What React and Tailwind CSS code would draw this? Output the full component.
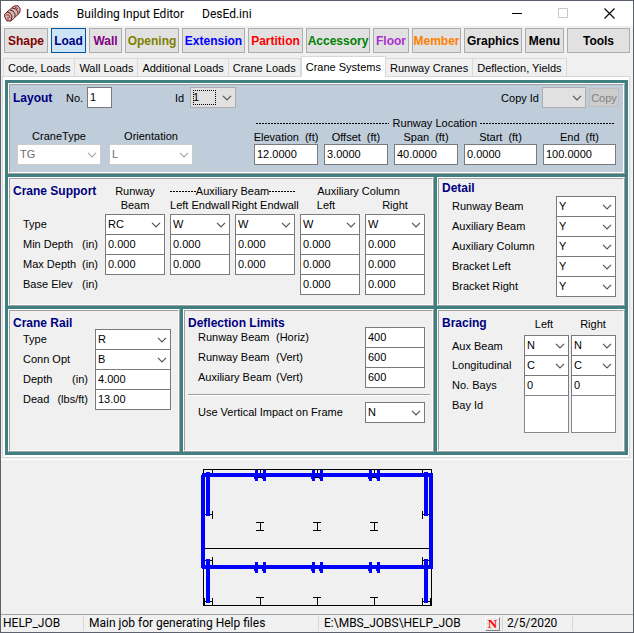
import React from "react";

function cx(...parts) {
  return parts.filter(Boolean).join(" ");
}

function Chevron({ className }) {
  return (
    <svg
      viewBox="0 0 10 6"
      className={cx("pointer-events-none absolute right-1 top-1/2 h-[6px] w-[10px] -translate-y-1/2", className)}
      fill="none"
      stroke="currentColor"
      strokeWidth="1.2"
      aria-hidden="true"
    >
      <path d="M1 0.8 L5 4.8 L9 0.8" />
    </svg>
  );
}

const tones = {
  normal: "border-[#7a7a7a] bg-white text-black",
  disabled: "border-[#cccccc] bg-white text-[#6d6d6d]",
  button: "border-[#adadad] bg-[#e1e1e1] text-black",
};

function Pick({ id, label, value, tone = "normal", disabled, focused, className }) {
  return (
    <div className={cx("relative h-[21px]", className)}>
      <select
        id={id}
        aria-label={label}
        defaultValue={value}
        disabled={disabled}
        className={cx(
          "block h-full w-full appearance-none rounded-none border pb-[2px] pl-[2px] pr-4 opacity-100 outline-none",
          tones[tone]
        )}
      >
        <option value={value}>{value}</option>
      </select>
      {focused && (
        <span className="pointer-events-none absolute inset-y-[3px] left-[3px] right-5 border border-dotted border-black" />
      )}
      <Chevron className={tone === "disabled" ? "text-[#a8a8a8]" : "text-[#555555]"} />
    </div>
  );
}

function Field({ id, label, value, className }) {
  return (
    <input
      id={id}
      aria-label={label}
      defaultValue={value}
      className={cx(
        "block h-[21px] w-full min-w-0 rounded-none border border-[#7a7a7a] bg-white pb-[2px] pl-[2px] text-black outline-none",
        className
      )}
    />
  );
}

function Panel({ className, children }) {
  return (
    <section className="min-w-0 border border-t-white border-l-white border-r-[#a0a0a0] border-b-[#a0a0a0]">
      <div
        className={cx(
          "h-full border border-t-[#a0a0a0] border-l-[#a0a0a0] border-r-white border-b-white",
          className
        )}
      >
        {children}
      </div>
    </section>
  );
}

function Heading({ className, children }) {
  return (
    <h2 className={cx("whitespace-nowrap text-[12px] font-bold leading-[14px] text-[#000080]", className)}>
      {children}
    </h2>
  );
}

function Dashes() {
  return (
    <span className="h-px flex-1 bg-[repeating-linear-gradient(90deg,#000_0_2px,transparent_2px_3px)]" />
  );
}

function RowLabel({ htmlFor, text, unit, className }) {
  return (
    <label htmlFor={htmlFor} className={cx("flex h-5 items-center justify-between whitespace-nowrap", className)}>
      <span>{text}</span>
      {unit && <span>{unit}</span>}
    </label>
  );
}

const modules = [
  ["Shape", "text-[#800000]"],
  ["Load", "text-[#000080]"],
  ["Wall", "text-[#800080]"],
  ["Opening", "text-[#808000]"],
  ["Extension", "text-[#0000ff]"],
  ["Partition", "text-[#ff0000]"],
  ["Accessory", "text-[#008000]"],
  ["Floor", "text-[#a830d0]"],
  ["Member", "text-[#ff8000]"],
  ["Graphics", "text-black"],
  ["Menu", "text-black"],
  ["Tools", "text-black"],
];

const tabs = [
  "Code, Loads",
  "Wall Loads",
  "Additional Loads",
  "Crane Loads",
  "Crane Systems",
  "Runway Cranes",
  "Deflection, Yields",
];

function TitleBar() {
  return (
    <header className="flex h-[25px] items-center bg-white pl-[3px] font-['Roboto','Noto_Sans',sans-serif] text-[12px]">
      <svg viewBox="0 0 17 17" className="h-[17px] w-[17px]" aria-hidden="true">
        <path d="M.7 9 L10 1 L14 .7 L16.3 4 L15.5 8 L7 16 L3 16 L.7 12 Z" fill="#cdbcbc" stroke="#701818" />
        <path d="M3 7 L6 8 L8 11 L7 16 M6 5 L9 6 L11 9 V12 M8 3 L12 4 L14 7 V9" fill="none" stroke="#701818" />
        <path d="M2 10 L5 10 L6 13 M4 12 V15 M11 2 L14 4" fill="none" stroke="#a03030" />
      </svg>
      <h1 className="ml-[5px]">Loads</h1>
      <span className="ml-[18px]">Building Input Editor</span>
      <span className="ml-[18px]">DesEd.ini</span>
      <div className="ml-auto flex pr-[18px]">
        <button aria-label="Minimize" className="mr-[35px]">
          <svg viewBox="0 0 11 11" className="h-[11px] w-[11px]" stroke="#000"><path d="M0 5.5H10" /></svg>
        </button>
        <button aria-label="Maximize" disabled className="mr-[35px]">
          <svg viewBox="0 0 11 11" className="h-[11px] w-[11px]" fill="none" stroke="#c8c8c8"><path d="M.5 .5H9.5V9.5H.5Z" /></svg>
        </button>
        <button aria-label="Close">
          <svg viewBox="0 0 11 11" className="h-[11px] w-[11px]" stroke="#000" strokeWidth="1.1"><path d="M.5 .5L10.5 10.5M10.5 .5L.5 10.5" /></svg>
        </button>
      </div>
    </header>
  );
}

function Toolbar() {
  return (
    <nav className="grid grid-cols-[44fr_35fr_33fr_54fr_63fr_55fr_64fr_36fr_49fr_58fr_39fr_63fr] gap-[3px] pl-[3px] pr-[3px] pt-[2px]">
      {modules.map(([name, color]) => (
        <button
          key={name}
          className={cx(
            "flex h-[25px] min-w-0 items-center justify-center border text-[12px] font-bold",
            color,
            name === "Load" ? "border-[#005499] bg-[#cce4f7]" : "border-[#adadad] bg-[#e1e1e1]"
          )}
        >
          {name}
        </button>
      ))}
    </nav>
  );
}

function Tabs() {
  return (
    <div role="tablist" className="flex items-end pl-[2px] pt-[3px]">
      {tabs.map((name) =>
        name === "Crane Systems" ? (
          <button
            key={name}
            role="tab"
            aria-selected="true"
            className="relative -mb-px h-[21px] whitespace-nowrap border border-b-0 border-[#d9d9d9] bg-white px-1"
          >
            {name}
          </button>
        ) : (
          <button
            key={name}
            role="tab"
            aria-selected="false"
            className="h-[18px] whitespace-nowrap border border-b-0 border-l-0 border-[#d9d9d9] px-1 first:border-l"
          >
            {name}
          </button>
        )
      )}
    </div>
  );
}

const locations = [
  ["Elevation", "12.0000"],
  ["Offset", "3.0000"],
  ["Span", "40.0000"],
  ["Start", "0.0000"],
  ["End", "100.0000"],
];

function LayoutPanel() {
  return (
    <Panel className="bg-[#bfccda] px-[3px] pb-[7px] pr-[7px] pt-[2px]">
      <div className="flex h-[21px] items-center">
        <Heading className="w-[53px]">Layout</Heading>
        <label htmlFor="layout-no" className="w-[21px]">No.</label>
        <div className="w-[25px]"><Field id="layout-no" value="1" /></div>
        <label htmlFor="layout-id" className="ml-[63px] w-[15px]">Id</label>
        <Pick id="layout-id" value="1" tone="button" focused className="w-[46px]" />
        <label htmlFor="copy-id" className="ml-auto mr-[3px]">Copy Id</label>
        <Pick id="copy-id" value="" tone="button" className="w-[44px]" />
        <button disabled className="-mr-[3px] ml-[3px] h-[19px] w-[30px] border border-[#bfbfbf] bg-[#cccccc] text-[#838383]">
          Copy
        </button>
      </div>
      <div className="mt-[8px] flex items-end justify-between">
        <div className="flex gap-2 pl-1">
          {[["CraneType", "TG"], ["Orientation", "L"]].map(([name, value]) => (
            <div key={name} className="w-[84px]">
              <label htmlFor={name} className="block h-[15px] text-center leading-[14px]">{name}</label>
              <Pick id={name} value={value} tone="disabled" disabled />
            </div>
          ))}
        </div>
        <div role="group" aria-labelledby="runway-location" className="w-[362px]">
          <div className="flex h-[14px] items-center gap-[3px] pl-[2px] pr-[2px]">
            <Dashes />
            <span id="runway-location" className="pl-[1px]">Runway Location</span>
            <span className="flex w-[134px]"><Dashes /></span>
          </div>
          <div className="grid grid-cols-[64fr_64fr_64fr_73fr_73fr] gap-x-[6px]">
            {locations.map(([name, value]) => (
              <div key={name} className="min-w-0">
                <label htmlFor={name} className="flex h-[14px] items-center justify-center gap-[6px]">
                  <span>{name}</span>
                  <span>(ft)</span>
                </label>
                <Field id={name} value={value} />
              </div>
            ))}
          </div>
        </div>
      </div>
    </Panel>
  );
}

const supportColumns = [
  ["Runway Beam", "RC", ["0.000", "0.000"]],
  ["Aux Beam Left Endwall", "W", ["0.000", "0.000"]],
  ["Aux Beam Right Endwall", "W", ["0.000", "0.000"]],
  ["Aux Column Left", "W", ["0.000", "0.000", "0.000"]],
  ["Aux Column Right", "W", ["0.000", "0.000", "0.000"]],
];
const supportRows = ["Min Depth", "Max Depth", "Base Elev"];

function CraneSupport() {
  return (
    <Panel className="pr-[7px] pt-[5px]">
      <div className="grid grid-cols-[90px_repeat(5,minmax(0,1fr))] gap-x-[5px] whitespace-nowrap text-center leading-[14px]">
        <Heading className="pl-[3px] text-left">Crane Support</Heading>
        <span>Runway</span>
        <div className="col-span-2 flex items-center">
          <Dashes />
          <span>Auxiliary Beam</span>
          <Dashes />
        </div>
        <span className="col-span-2 pr-2">Auxiliary Column</span>
        <span />
        <span>Beam</span>
        <span className="flex justify-center">Left Endwall</span>
        <span className="flex justify-center">Right Endwall</span>
        <span className="pr-2">Left</span>
        <span>Right</span>
      </div>
      <div className="mt-[2px] grid grid-cols-[90px_repeat(5,minmax(0,1fr))] gap-x-[5px] pb-[9px]">
        <div className="pl-[13px] pr-[2px]">
          <RowLabel text="Type" />
          <RowLabel text="Min Depth" unit="(in)" />
          <RowLabel text="Max Depth" unit="(in)" />
          <RowLabel text="Base Elev" unit="(in)" />
        </div>
        {supportColumns.map(([name, type, values]) => (
          <div key={name}>
            <Pick label={name + " Type"} value={type} />
            {values.map((value, i) => (
              <Field key={supportRows[i]} label={name + " " + supportRows[i]} value={value} className="-mt-px" />
            ))}
          </div>
        ))}
      </div>
    </Panel>
  );
}

const details = ["Runway Beam", "Auxiliary Beam", "Auxiliary Column", "Bracket Left", "Bracket Right"];

function Detail() {
  return (
    <Panel className="pl-[3px] pr-[7px] pt-[2px]">
      <Heading className="h-[15px]">Detail</Heading>
      {details.map((name) => (
        <div key={name} className="flex h-5 justify-between pl-[10px]">
          <RowLabel htmlFor={"detail-" + name} text={name} />
          <Pick id={"detail-" + name} value="Y" className="w-[60px]" />
        </div>
      ))}
    </Panel>
  );
}

function CraneRail() {
  const rows = [
    ["Type", "", "R", true],
    ["Conn Opt", "", "B", true],
    ["Depth", "(in)", "4.000", false],
    ["Dead", "(lbs/ft)", "13.00", false],
  ];
  return (
    <Panel className="pl-[3px] pr-[7px] pt-[5px]">
      <Heading className="h-[13px]">Crane Rail</Heading>
      {rows.map(([name, unit, value, list]) => (
        <div key={name} className="flex h-5 pl-[10px]">
          <RowLabel htmlFor={"rail-" + name} text={name} unit={unit} className="mr-[7px] w-[65px]" />
          {list ? (
            <Pick id={"rail-" + name} value={value} className="flex-1" />
          ) : (
            <div className="min-w-0 flex-1"><Field id={"rail-" + name} value={value} /></div>
          )}
        </div>
      ))}
    </Panel>
  );
}

function DeflectionLimits() {
  const rows = [
    ["Runway Beam", "(Horiz)", "400"],
    ["Runway Beam", "(Vert)", "600"],
    ["Auxiliary Beam", "(Vert)", "600"],
  ];
  return (
    <Panel className="pl-[3px] pt-[5px]">
      <Heading className="h-[11px]">Deflection Limits</Heading>
      {rows.map(([name, unit, value], i) => (
        <div key={name + unit} className="flex h-5 justify-between pl-[10px] pr-[7px]">
          <label htmlFor={"limit-" + i} className="flex h-5 items-center">
            <span className="w-[78px]">{name}</span>
            <span>{unit}</span>
          </label>
          <div className="w-[60px]"><Field id={"limit-" + i} value={value} /></div>
        </div>
      ))}
      <hr className="mr-[2px] mt-[7px] h-[2px] border-b border-t border-b-white border-t-[#a0a0a0]" />
      <div className="mt-[6px] flex h-5 justify-between pl-[10px] pr-[7px]">
        <RowLabel htmlFor="vertical-impact" text="Use Vertical Impact on Frame" />
        <Pick id="vertical-impact" value="N" className="w-[60px]" />
      </div>
    </Panel>
  );
}

function Bracing() {
  return (
    <Panel className="pl-[3px] pr-[7px] pt-[5px]">
      <div className="flex h-[19px] items-start leading-[16px]">
        <Heading className="flex-1">Bracing</Heading>
        <span className="w-[52px] text-center">Left</span>
        <span className="w-[46px] text-center">Right</span>
      </div>
      <div className="flex pb-[17px] pl-[10px]">
        <div className="flex-1">
          <RowLabel text="Aux Beam" className="pt-[2px]" />
          <RowLabel text="Longitudinal" />
          <RowLabel text="No. Bays" />
          <RowLabel text="Bay Id" />
        </div>
        <div className="flex gap-[2px]">
          {["Left", "Right"].map((side) => (
            <div key={side} className="w-[45px]">
              <Pick label={side + " Aux Beam"} value="N" />
              <Pick label={side + " Longitudinal"} value="C" className="-mt-px" />
              <Field label={side + " No. Bays"} value="0" className="-mt-px" />
              <textarea
                aria-label={side + " Bay Id"}
                className="-mt-px block h-[38px] w-full resize-none rounded-none border border-[#828790] bg-white outline-none"
              />
            </div>
          ))}
        </div>
      </div>
    </Panel>
  );
}

const columnLines = [260, 317, 374];

function PlanDrawing() {
  return (
    <svg
      viewBox="199 466 236 142"
      className="h-[142px] w-[236px]"
      shapeRendering="crispEdges"
      role="img"
      aria-label="Crane plan"
    >
      <g fill="none" stroke="#000" strokeWidth="1">
        <path d="M203.5 469.5H431.5V605.5H203.5Z M203 548.5H431" />
        {columnLines.map((x) => (
          <g key={x} transform={"translate(" + x + " 0)"}>
            <path d="M.5 470V477 M-3 477.5H4 M-4 522.5H4 M-4 530.5H4 M.5 522V530 M-4 597.5H4 M.5 597V605" />
          </g>
        ))}
        <path d="M212.5 470V477 M212.5 511V519 M205 514.5H212 M212.5 557V565 M205 560.5H212 M212.5 598V605 M204.5 598V605 M205 601.5H212" />
        <path d="M422.5 470V477 M422.5 511V519 M422 514.5H430 M422.5 557V565 M422 560.5H430 M422.5 598V605 M430.5 598V605 M422 601.5H430" />
      </g>
      <g fill="#0000ff">
        <rect x="202" y="473" width="231" height="4" />
        <rect x="202" y="565" width="231" height="4" />
        <rect x="201" y="475" width="4" height="93" />
        <rect x="429" y="474" width="4" height="95" />
        {[206, 424].map((x) => (
          <g key={x}>
            <rect x={x} y="472" width="4" height="44" />
            <rect x={x} y="559" width="4" height="44" />
          </g>
        ))}
        {columnLines.map((x) =>
          [470, 562].map((y) => (
            <path
              key={x + "-" + y}
              d={
                "M" + (x - 5) + " " + y + "h3v11h-3v-2h-1v-6h1z M" + (x + 3) + " " + y + "h3v11h-3v-2h-1v-6h1z"
              }
            />
          ))
        )}
      </g>
    </svg>
  );
}

function StatusBar() {
  return (
    <footer className="grid h-[18px] grid-cols-[83fr_235fr_184fr_70fr_60fr] items-center whitespace-nowrap border-t border-[#a0a0a0] font-['Roboto','Noto_Sans',sans-serif] text-[12px] leading-[15px]">
      <span className="border-r border-[#d7d7d7] pl-[2px]">HELP_JOB</span>
      <span className="border-r border-[#d7d7d7] pl-[5px]">Main job for generating Help files</span>
      <span className="flex items-center justify-between border-r border-[#d7d7d7] pl-[5px] pr-[2px]">
        E:\MBS_JOBS\HELP_JOB
        <span className="flex h-[14px] w-[15px] items-center justify-center border border-b-[#808080] border-l-white border-r-[#808080] border-t-white bg-[#e8e8e8] font-['Liberation_Serif',serif] text-[13px] font-bold leading-none text-[#ff0000]">
          N
        </span>
      </span>
      <span className="border-r border-[#d7d7d7] pl-[4px]">2/5/2020</span>
      <span />
    </footer>
  );
}

export default function App() {
  return (
    <div className="flex min-h-screen flex-col border border-[#5c606c] bg-[#f0f0f0] font-['Liberation_Sans',Arial,sans-serif] text-[11px] leading-[14px] text-black">
      <TitleBar />
      <Toolbar />
      <Tabs />
      <main className="ml-px mr-[3px] border border-[#d9d9d9] bg-white pb-[2px] pl-[2px] pr-px pt-[3px]">
        <div className="grid gap-[3px] bg-[#408080] p-[3px]">
          <LayoutPanel />
          <div className="grid grid-cols-[426fr_188fr] gap-[3px] [&>section]:bg-[#f0f0f0]">
            <CraneSupport />
            <Detail />
          </div>
          <div className="grid grid-cols-[172fr_251fr_188fr] gap-[3px] [&>section]:bg-[#f0f0f0]">
            <CraneRail />
            <DeflectionLimits />
            <Bracing />
          </div>
        </div>
      </main>
      <div className="mt-px flex flex-1 items-start justify-center border-t border-white pt-[6px]">
        <PlanDrawing />
      </div>
      <StatusBar />
    </div>
  );
}
